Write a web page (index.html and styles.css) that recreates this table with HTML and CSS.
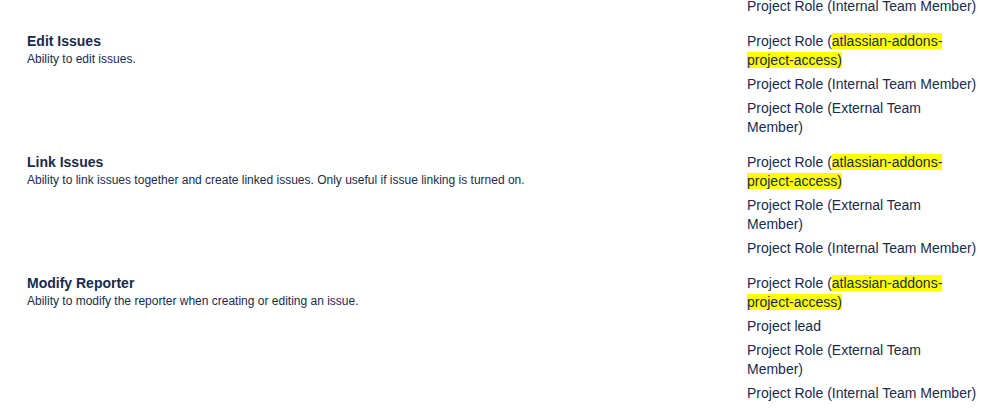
FILE: index.html
```html
<!DOCTYPE html>
<html>
<head>
<meta charset="utf-8">
<link rel="stylesheet" href="styles.css">
</head>
<body>
<div class="perms">
  <div class="row row-partial">
    <div class="perm"></div>
    <ul class="grants">
      <li>Project Role (Internal Team Member)</li>
    </ul>
  </div>
  <div class="row">
    <div class="perm">
      <h3 class="perm-title">Edit Issues</h3>
      <p class="perm-desc">Ability to edit issues.</p>
    </div>
    <ul class="grants">
      <li>Project Role (<mark class="hl">atlassian-addons-project-access)</mark></li>
      <li>Project Role (Internal Team Member)</li>
      <li>Project Role (External Team Member)</li>
    </ul>
  </div>
  <div class="row">
    <div class="perm">
      <h3 class="perm-title">Link Issues</h3>
      <p class="perm-desc">Ability to link issues together and create linked issues. Only useful if issue linking is turned on.</p>
    </div>
    <ul class="grants">
      <li>Project Role (<mark class="hl">atlassian-addons-project-access)</mark></li>
      <li>Project Role (External Team Member)</li>
      <li>Project Role (Internal Team Member)</li>
    </ul>
  </div>
  <div class="row">
    <div class="perm">
      <h3 class="perm-title">Modify Reporter</h3>
      <p class="perm-desc">Ability to modify the reporter when creating or editing an issue.</p>
    </div>
    <ul class="grants">
      <li>Project Role (<mark class="hl">atlassian-addons-project-access)</mark></li>
      <li>Project lead</li>
      <li>Project Role (External Team Member)</li>
      <li>Project Role (Internal Team Member)</li>
    </ul>
  </div>
</div>
</body>
</html>
```
FILE: styles.css
```css
html, body {
  margin: 0;
  padding: 0;
  background: #ffffff;
}
body {
  font-family: "Liberation Sans", Arial, sans-serif;
  color: #172b4d;
  overflow: hidden;
}
.perms {
  margin-top: -3px;
  padding-left: 27px;
}
.row {
  display: grid;
  grid-template-columns: 720px 231px;
  padding: 8px 0;
}
.row-partial {
  padding-top: 0;
}
.perm-title {
  margin: 0;
  font-size: 14px;
  font-weight: 700;
  line-height: 19px;
}
.perm-desc {
  margin: 0;
  font-size: 12px;
  line-height: 16px;
}
.grants {
  list-style: none;
  margin: 0;
  padding: 0;
  display: flex;
  flex-direction: column;
  gap: 5px;
  font-size: 14px;
  line-height: 19px;
}
.hl {
  background: #ffff00;
  color: inherit;
}
```
